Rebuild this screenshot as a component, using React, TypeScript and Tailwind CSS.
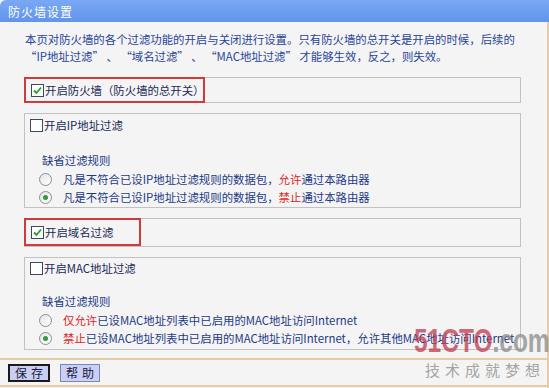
import React from 'react';

const font = { fontFamily: '"Noto Sans CJK SC", "Noto Sans", sans-serif' };

const Check: React.FC<{ checked?: boolean }> = ({ checked }) => (
  <span className="inline-flex items-center justify-center w-[13px] h-[13px] border border-[#3c4a5c] bg-white shrink-0">
    {checked && (
      <svg width="9" height="9" viewBox="0 0 9 9">
        <path d="M1 4.5 L3.5 7 L8 1.5" fill="none" stroke="#21a121" strokeWidth="1.8" />
      </svg>
    )}
  </span>
);

const Radio: React.FC<{ checked?: boolean }> = ({ checked }) => (
  <span className="inline-flex items-center justify-center w-[13px] h-[13px] rounded-full border border-[#8a8f96] bg-gradient-to-br from-[#e4e4e4] to-white shrink-0">
    {checked && <span className="w-[5px] h-[5px] rounded-full bg-[#2f9a3c]" />}
  </span>
);

const RuleRow: React.FC<{ checked?: boolean; children: React.ReactNode }> = ({ checked, children }) => (
  <div className="flex items-center h-[18px] pl-[14px]">
    <Radio checked={checked} />
    <span className="ml-[11px] text-[#1d3a86] whitespace-nowrap">{children}</span>
  </div>
);

export default function App() {
  return (
    <div className="w-[549px] h-[388px] bg-[#f4f4f4] relative overflow-hidden text-[11.4px] leading-[17px]" style={font}>
      {/* title bar */}
      <div className="h-[22px] bg-gradient-to-b from-[#7aa8f4] to-[#6194eb] rounded-tl-[6px] flex items-center pl-[8px]">
        <span className="text-white text-[12px] tracking-[1px]">防火墙设置</span>
      </div>

      <div className="border-r-2 border-[#e6cba4] h-[366px] flex flex-col">
        <div className="pl-[25px] pt-[9px] text-[#27459a] whitespace-nowrap">
          <p>本页对防火墙的各个过滤功能的开启与关闭进行设置。只有防火墙的总开关是开启的时候，后续的</p>
          <p>“IP地址过滤” 、 “域名过滤” 、 “MAC地址过滤” 才能够生效，反之，则失效。</p>
        </div>

        <div className="ml-[24px] w-[497px] flex flex-col">
          {/* master switch */}
          <div className="mt-[12px] h-[26px] border border-[#c2c2c2] flex">
            <div className="-m-px w-[181px] h-[26px] border-2 border-[#d23a3a] flex items-center pl-[5px]">
              <Check checked />
              <span className="ml-[1px] text-[#1c2a58] whitespace-nowrap">开启防火墙（防火墙的总开关）</span>
            </div>
          </div>

          {/* IP filter */}
          <div className="mt-[10px] h-[95px] border border-[#c2c2c2] flex flex-col">
            <div className="h-[22px] flex items-center pl-[5px]">
              <Check />
              <span className="ml-[1px] text-[#1c2a58]">开启IP地址过滤</span>
            </div>
            <div className="mt-[16px] h-[16px] pl-[17px] text-[#1d3a86] leading-[16px]">缺省过滤规则</div>
            <div className="mt-[2px]">
              <RuleRow>
                凡是不符合已设IP地址过滤规则的数据包，<span className="text-[#e02424]">允许</span>通过本路由器
              </RuleRow>
              <RuleRow checked>
                凡是不符合已设IP地址过滤规则的数据包，<span className="text-[#e02424]">禁止</span>通过本路由器
              </RuleRow>
            </div>
          </div>

          {/* domain filter */}
          <div className="mt-[10px] h-[29px] border border-[#c2c2c2] flex">
            <div className="-m-px w-[117px] h-[28px] border-2 border-[#d23a3a] flex items-center pl-[5px]">
              <Check checked />
              <span className="ml-[1px] text-[#1c2a58] whitespace-nowrap">开启域名过滤</span>
            </div>
          </div>

          {/* MAC filter */}
          <div className="mt-[10px] h-[93px] border border-[#c2c2c2] flex flex-col">
            <div className="h-[20px] flex items-center pl-[5px]">
              <Check />
              <span className="ml-[1px] text-[#1c2a58]">开启MAC地址过滤</span>
            </div>
            <div className="mt-[15px] h-[16px] pl-[17px] text-[#1d3a86] leading-[16px]">缺省过滤规则</div>
            <div className="mt-[2px]">
              <RuleRow>
                <span className="text-[#e02424]">仅允许</span>已设MAC地址列表中已启用的MAC地址访问Internet
              </RuleRow>
              <RuleRow checked>
                <span className="text-[#e02424]">禁止</span>已设MAC地址列表中已启用的MAC地址访问Internet，允许其他MAC地址访问Internet
              </RuleRow>
            </div>
          </div>
        </div>

        {/* footer */}
        <div className="mt-[8px] border-t-2 border-[#e6cba4] h-[29px] flex items-center pl-[8px] gap-[10px] border-b-2">
          <button className="h-[18px] w-[42px] border-2 border-[#1a1a1a] bg-[#c9cff0] text-[#1a1a40] text-[12px] leading-[14px] tracking-[4px] pl-[4px]">
            保存
          </button>
          <button className="h-[18px] w-[40px] border border-[#7a86b8] bg-[#c9cff5] text-[#1a1a40] text-[12px] leading-[14px] tracking-[4px] pl-[4px]">
            帮助
          </button>
        </div>
      </div>

      {/* 51CTO watermark */}
      <div
        className="absolute left-[414px] top-[324px] flex items-end opacity-75 pointer-events-none origin-left scale-x-[0.72] whitespace-nowrap"
        style={{ fontFamily: '"Liberation Sans", sans-serif' }}
      >
        <span className="text-[34px] leading-[32px] font-extrabold text-[#c23a4e]">51CTO</span>
        <span className="text-[34px] leading-[32px] font-extrabold text-[#8a8a8a]">.com</span>
      </div>
      <div className="absolute left-[425px] top-[361px] text-[15px] leading-[18px] tracking-[5px] text-[#a4a4a4] pointer-events-none whitespace-nowrap">
        技术成就梦想
      </div>
    </div>
  );
}
